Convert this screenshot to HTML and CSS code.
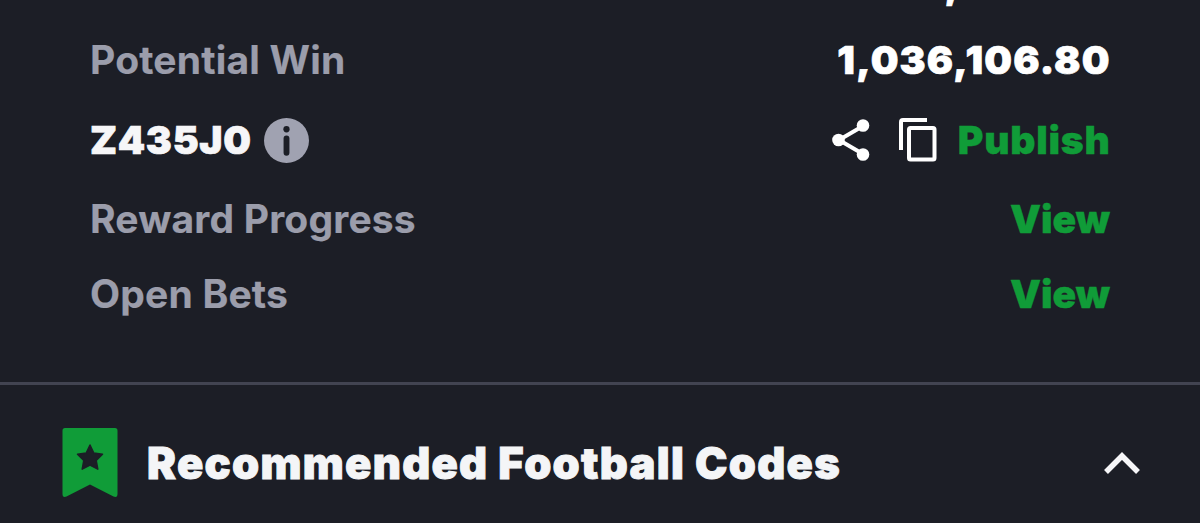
FILE: index.html
```
<!DOCTYPE html>
<html lang="en">
<head>
<meta charset="utf-8">
<title>Bet details</title>
<link rel="stylesheet" href="styles.css">
</head>
<body>
<main class="screen">
  <section class="details">
    <div class="row row-cut"><span class="value">,</span></div>
    <div class="row row-win"><span class="label">Potential Win</span><span class="value amount">1,036,106.80</span></div>
    <div class="row row-code">
      <span class="code-group"><span class="value code">Z435J0</span>
        <svg class="info" viewBox="0 0 46 46"><circle cx="23" cy="23" r="23" fill="#a0a2b1"/><circle cx="23" cy="11.500" r="3.200" fill="#1c1e26"/><path d="M23 21v14.500" fill="none" stroke="#1c1e26" stroke-width="6" stroke-linecap="round"/></svg></span>
      <span class="actions">
        <svg class="share" viewBox="0 0 38 42"><path d="M31 7L7 21l24 14" fill="none" stroke="#fff" stroke-width="4"/><circle cx="31" cy="6.500" r="6.300" fill="#fff"/><circle cx="6.500" cy="21" r="6.300" fill="#fff"/><circle cx="31" cy="35.500" r="6.300" fill="#fff"/></svg>
        <svg class="copy" viewBox="0 0 38 44"><path d="M2 32V4q0-2 2-2h24" fill="none" stroke="#fff" stroke-width="4"/><rect x="10" y="10" width="25.500" height="31.500" rx="1.500" fill="none" stroke="#fff" stroke-width="4"/></svg>
        <span class="link publish">Publish</span>
      </span>
    </div>
    <div class="row row-reward"><span class="label reward">Reward Progress</span><span class="link">View</span></div>
    <div class="row row-bets"><span class="label">Open Bets</span><span class="link">View</span></div>
  </section>
  <section class="codes">
    <svg class="bookmark" viewBox="0 0 56 70"><path d="M3 0h50q2.500 0 2.500 2.500V66q0 4-4 2.500L28 56.500 4.500 68.500Q.5 70 .5 66V2.500Q.5 0 3 0z" fill="#109c38"/><path d="M28 17l3.800 8 8.700 1.200-6.300 6.300 1.600 8.700-7.800-4-7.800 4 1.600-8.700-6.300-6.300 8.700-1.200z" fill="#1c1e26" stroke="#1c1e26" stroke-width="1.500" stroke-linejoin="round"/></svg>
    <h2 class="title">Recommended Football Codes</h2>
    <svg class="chevron" viewBox="0 0 36 22"><path d="M2 20L18 4l16 16" fill="none" stroke="#f6f6f8" stroke-width="5.500"/></svg>
  </section>
</main>
</body>
</html>
```
FILE: styles.css
```
* { box-sizing: border-box; }
body { margin: 0; background: #1c1e26; font-family: Inter, sans-serif; }
.screen { width: 1200px; height: 523px; overflow: hidden; }
svg { display: block; flex: none; }
.details { height: 385px; padding: 0 90px; border-bottom: 3px solid #424451; }
.row { display: flex; align-items: center; justify-content: space-between; font-size: 39px; line-height: 48px; white-space: nowrap; }
.row-cut { height: 8px; align-items: flex-end; justify-content: flex-end; padding-right: 151px; }
.row-win { height: 104px; }
.row-code { height: 56px; }
.row-reward { height: 101px; }
.row-bets { height: 50px; }
.label { color: #9b9dab; font-weight: 700; letter-spacing: 0.2px; -webkit-text-stroke: 0.2px; }
.value { color: #fff; font-weight: 900; -webkit-text-stroke: 0.7px; }
.amount { letter-spacing: 1.2px; margin-right: -0.7px; }
.code { color: #f6f6f8; letter-spacing: 0.7px; }
.link { color: #109c38; font-weight: 900; -webkit-text-stroke: 0.4px; }
.publish { letter-spacing: 0.75px; margin-right: -0.5px; }
.code-group, .actions { display: flex; align-items: center; }
.info { width: 45px; height: 45px; margin-left: 12px; }
.share { width: 38px; height: 42px; }
.copy { width: 38px; height: 44px; margin: 0 21px 0 29px; }
.codes { display: flex; align-items: center; height: 138px; padding: 18px 60px 0 62px; }
.bookmark { width: 56px; height: 70px; }
.title { margin: 0 auto 0 29px; color: #f4f5f7; font-size: 43.500px; font-weight: 900; letter-spacing: 1.25px; line-height: 54px; white-space: nowrap; -webkit-text-stroke: 0.9px; }
.chevron { width: 36px; height: 22px; }
```
